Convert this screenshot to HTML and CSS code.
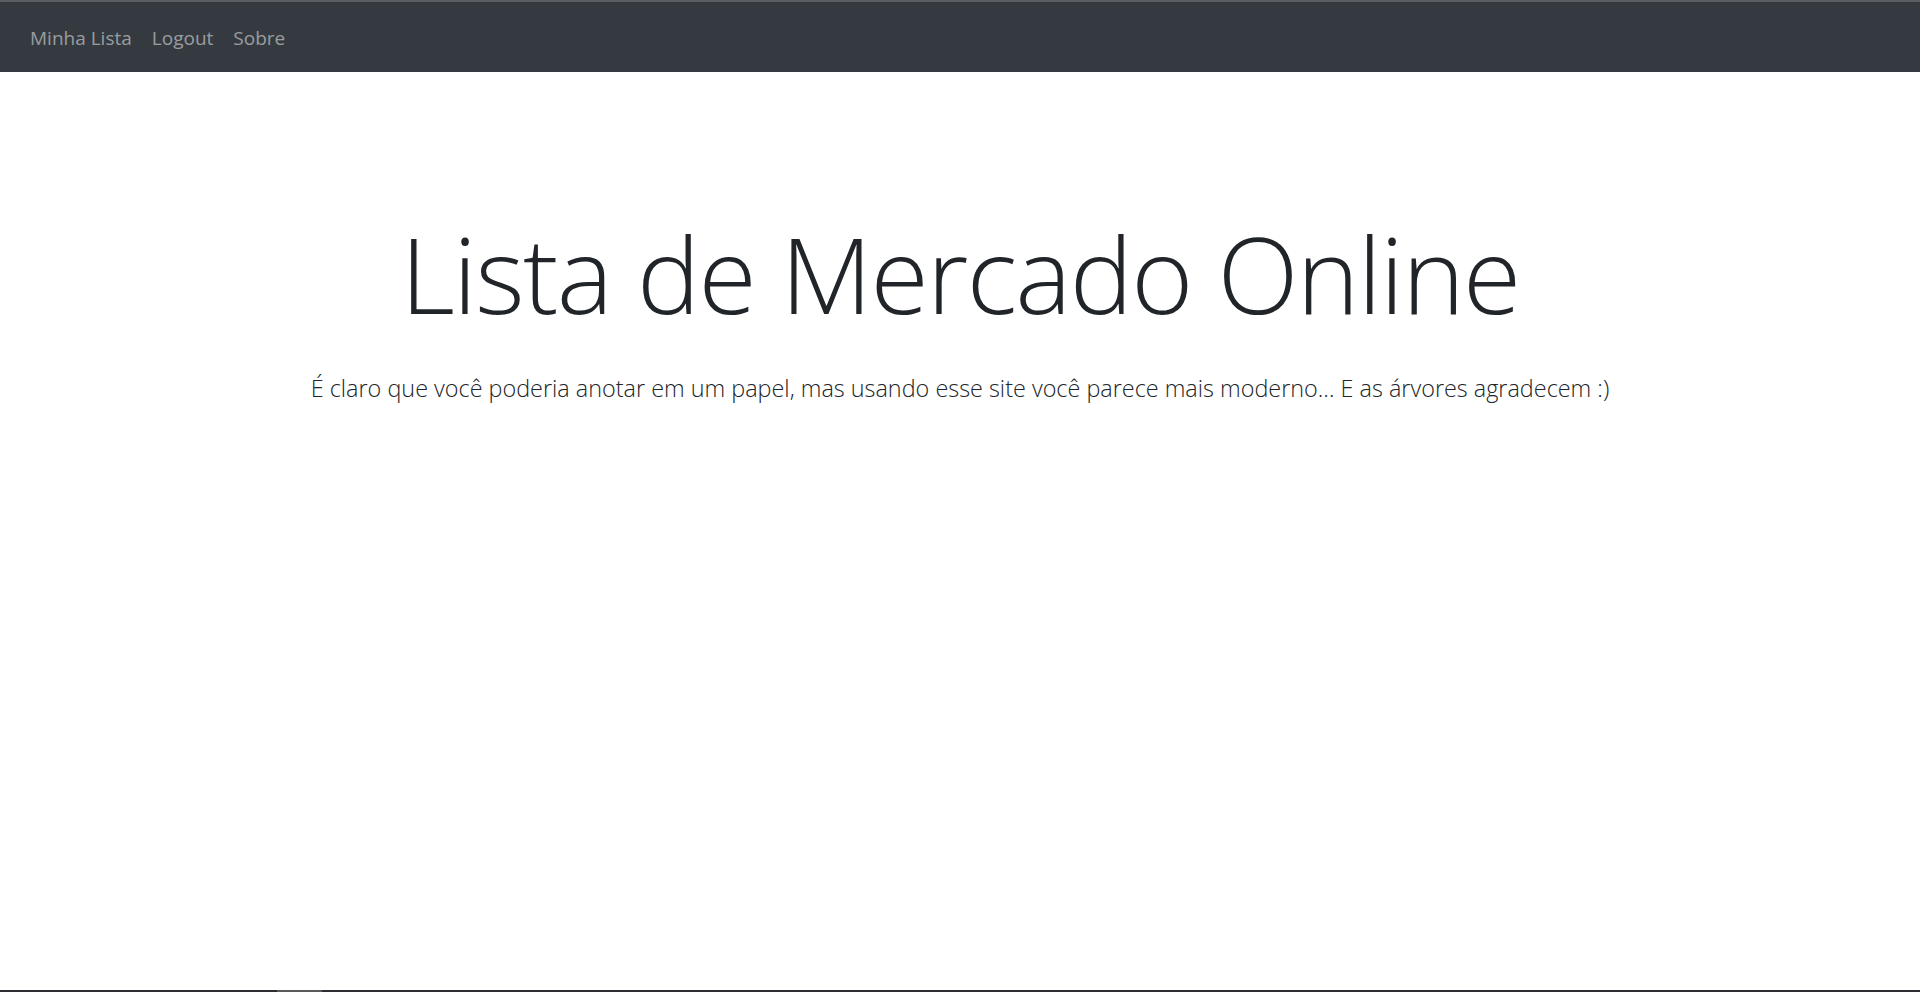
FILE: index.html
```html
<!DOCTYPE html>
<html lang="pt-BR">
<head>
<meta charset="utf-8">
<title>Lista de Mercado Online</title>
<link rel="stylesheet" href="styles.css">
</head>
<body>
<div class="page">
  <nav class="navbar">
    <ul class="nav">
      <li><a class="nav-link" href="#">Minha Lista</a></li>
      <li><a class="nav-link" href="#">Logout</a></li>
      <li><a class="nav-link" href="#">Sobre</a></li>
    </ul>
  </nav>
  <main class="jumbotron">
    <h1 class="title">Lista de Mercado Online</h1>
    <p class="lead">É claro que você poderia anotar em um papel, mas usando esse site você parece mais moderno... E as árvores agradecem :)</p>
  </main>
  <div class="bottom-bar"><span class="bottom-thumb"></span></div>
</div>
</body>
</html>
```

FILE: styles.css
```css
html, body {
  margin: 0;
  padding: 0;
  height: 100%;
}
body {
  font-family: "Open Sans", "Liberation Sans", sans-serif;
  color: #212529;
  background: #fff;
}
.page {
  display: flex;
  flex-direction: column;
  height: 100vh;
}
.navbar {
  background: #343a40;
  border-top: 2px solid #5a5d62;
  height: 70px;
  display: flex;
  align-items: center;
  padding: 2px 20px 0;
  box-sizing: border-box;
  height: 72px;
  flex: none;
}
.nav {
  list-style: none;
  margin: 0;
  padding: 0;
  display: flex;
}
.nav-link {
  display: block;
  padding: 10px 10px;
  font-size: 19px;
  line-height: 30px;
  color: rgba(255, 255, 255, 0.5);
  text-decoration: none;
}
.jumbotron {
  flex: 1;
  text-align: center;
  padding: 0 40px;
}
.title {
  font-size: 106px;
  font-weight: 300;
  letter-spacing: -1.7px;
  line-height: 1.2;
  margin: 138px 0 0;
}
.lead {
  font-size: 23.4px;
  font-weight: 300;
  margin: 35px 0 0;
  color: #212529;
}
.bottom-bar {
  flex: none;
  height: 2px;
  background: #2b2d30;
  position: relative;
}
.bottom-thumb {
  position: absolute;
  left: 277px;
  width: 45px;
  top: 0;
  height: 2px;
  background: #5a5a5a;
}
```
